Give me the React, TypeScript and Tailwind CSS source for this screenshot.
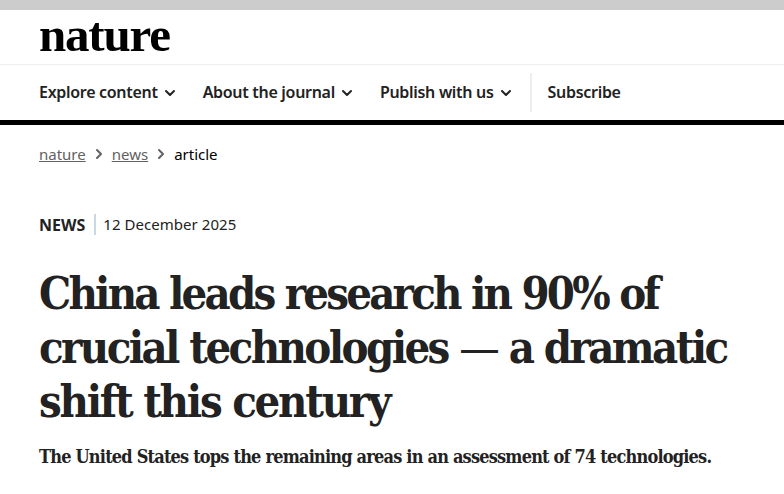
import { ChevronDown, ChevronRight } from "lucide-react";

const navItems = ["Explore content", "About the journal", "Publish with us"];

const App = () => {
  return (
    <div className="w-[784px] h-[494px] overflow-hidden bg-white font-['Noto_Sans',sans-serif] text-[#222222]">
      <div className="h-[10px] bg-[#cccccc]" />

      <header className="h-[55px] border-b border-[#eeeeee] pl-[39px]">
        <span className="block font-['Liberation_Serif',serif] font-bold text-[49px] leading-[50px] tracking-[-1.2px] text-black">
          nature
        </span>
      </header>

      <nav className="h-[55px] flex items-center pl-[39px] border-b-[5px] border-black box-content">
        {navItems.map((item) => (
          <div key={item} className="flex items-center mr-[25px]">
            <span className="text-[16px] leading-[22px] -mt-[1px] font-semibold tracking-[-0.3px]">{item}</span>
            <ChevronDown size={16} strokeWidth={3} className="ml-[4px]" />
          </div>
        ))}
        <div className="w-[2px] h-[39px] bg-[#eeeeee] -ml-[9px]" />
        <span className="ml-[16px] text-[16px] leading-[22px] -mt-[1px] font-semibold tracking-[-0.3px]">Subscribe</span>
      </nav>

      <div className="flex items-center pl-[39px] mt-[19px] h-[20px] text-[15px]">
        <a className="text-[#626262] underline">nature</a>
        <ChevronRight size={16} strokeWidth={3} className="mx-[5px] text-[#626262]" />
        <a className="text-[#626262] underline">news</a>
        <ChevronRight size={16} strokeWidth={3} className="mx-[5px] text-[#626262]" />
        <span className="text-black">article</span>
      </div>

      <div className="flex items-center pl-[39px] mt-[50px] h-[21px] text-[15px]">
        <span className="font-bold text-[16px]">NEWS</span>
        <div className="w-[2px] h-[21px] bg-[#c9d8e4] ml-[9px] mr-[7px]" />
        <span className="tracking-[0.05px]">12 December 2025</span>
      </div>

      <h1 className="pl-[39px] mt-[32px] font-['DejaVu_Serif',serif] font-bold text-[45px] leading-[54px] [font-stretch:condensed]">
        <span className="block tracking-[-2.8px]">China leads research in 90% of</span>
        <span className="block tracking-[-2.6px]">
          crucial technologies <span className="font-normal">—</span> a dramatic
        </span>
        <span className="block tracking-[-2.27px]">shift this century</span>
      </h1>

      <p className="pl-[39px] mt-[16px] font-['DejaVu_Serif',serif] font-bold text-[18px] leading-[24px] tracking-[-0.81px] [font-stretch:condensed]">
        The United States tops the remaining areas in an assessment of 74 technologies.
      </p>
    </div>
  );
};

export default App;
